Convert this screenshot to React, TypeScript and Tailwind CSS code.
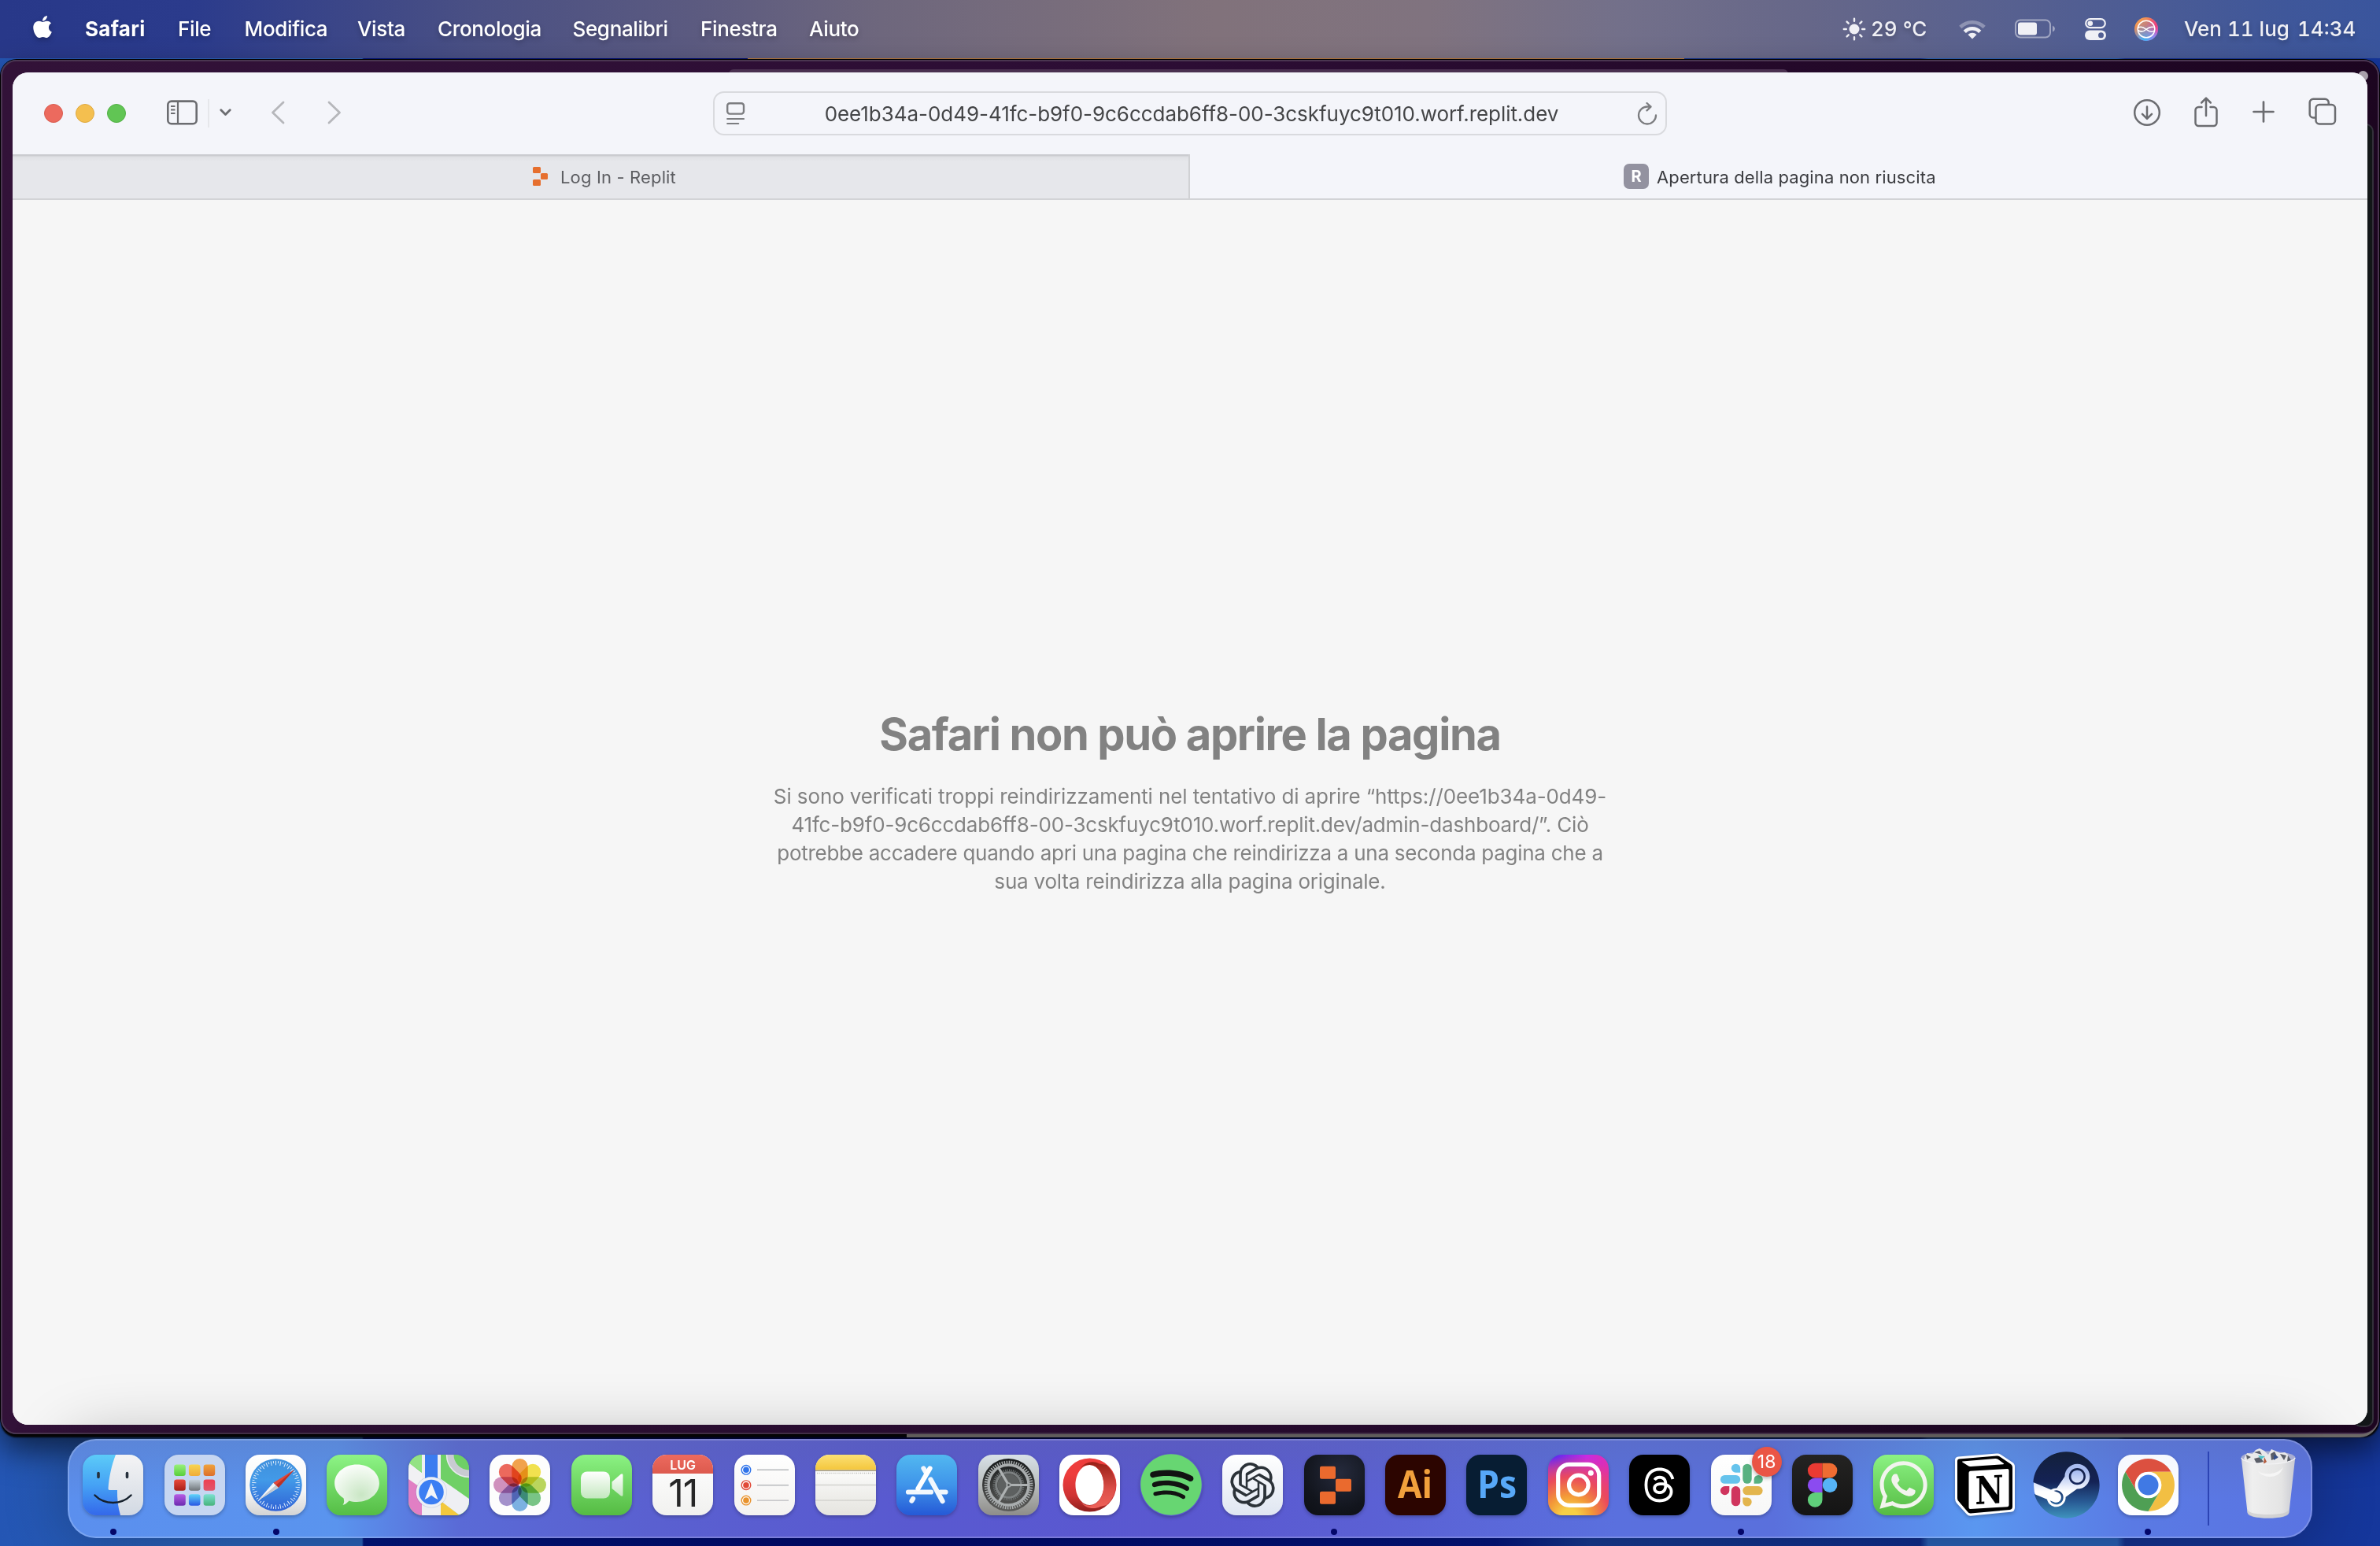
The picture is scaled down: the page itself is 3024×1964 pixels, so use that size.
import React from 'react';
import { FaApple, FaInstagram, FaSpotify, FaSteam, FaThreads, FaWhatsapp } from 'react-icons/fa6';

const menus = [
  { label: 'File', cls: 'w-[84.5px]' },
  { label: 'Modifica', cls: 'w-[143.5px]' },
  { label: 'Vista', cls: 'w-[102px]' },
  { label: 'Cronologia', cls: 'w-[171.5px]' },
  { label: 'Segnalibri', cls: 'w-[162.5px]' },
  { label: 'Finestra', cls: 'w-[138px]' },
  { label: 'Aiuto', cls: 'w-[80px]' },
];

function SiriIcon() {
  return (
    <svg className="block h-[30px] w-[30px]" viewBox="0 0 30 30">
      <defs>
        <linearGradient id="siriA" x1="0" y1="0" x2="1" y2="1">
          <stop offset="0" stopColor="#f3b34c" />
          <stop offset=".4" stopColor="#ee7a5c" />
          <stop offset=".7" stopColor="#c36be0" />
          <stop offset="1" stopColor="#b878f5" />
        </linearGradient>
        <radialGradient id="siriB" cx=".4" cy="1" r=".7">
          <stop offset="0" stopColor="#38b8f4" />
          <stop offset="1" stopColor="#38b8f4" stopOpacity="0" />
        </radialGradient>
        <radialGradient id="siriC" cx="1" cy=".3" r=".5">
          <stop offset="0" stopColor="#f5386c" />
          <stop offset="1" stopColor="#f5386c" stopOpacity="0" />
        </radialGradient>
      </defs>
      <circle cx="15" cy="15" r="15" fill="url(#siriA)" />
      <circle cx="15" cy="15" r="15" fill="url(#siriC)" />
      <circle cx="15" cy="15" r="15" fill="url(#siriB)" />
      <circle cx="15" cy="15" r="10.800" fill="#8a8fae" fillOpacity=".35" />
      <g fill="none" stroke="#fff" strokeWidth="1.500">
        <circle cx="15" cy="15" r="10.800" />
        <path d="M4.400 13.500C8 11 11 12.200 14.500 15s7.500 4.200 10.700 2.200" />
        <path d="M4.600 16.500C8.500 19 12 18 15.500 15s5.500-3.500 9-2.500" />
      </g>
    </svg>
  );
}

function MenuBar() {
  return (
    <header className="relative flex h-[74px] items-center bg-[linear-gradient(90deg,#283889_0%,#2b3b8c_8%,#4a5084_20%,#5b5a80_29%,#6e677d_37%,#81727b_51%,#80737f_60%,#73708a_68%,#666789_76%,#545f91_86%,#3f579a_96%,#3a559d_100%)] text-[26px] leading-[74px] text-white [text-shadow:0_3px_6px_rgba(0,0,0,0.25)]">
      <FaApple className="ml-[39px] mt-[-7px] h-[32px] w-[30px] drop-shadow-[0_3px_3px_rgba(0,0,0,0.25)]" />
      <span className="ml-[39px] w-[118px] whitespace-nowrap font-bold tracking-[0.3px]">Safari</span>
      {menus.map((m) => (
        <span key={m.label} className={m.cls + ' whitespace-nowrap font-medium tracking-[-0.35px]'}>{m.label}</span>
      ))}
      <div className="absolute right-0 top-0 flex h-[74px] items-center font-medium tabular-nums text-[#f0f0f5]">
        <svg className="h-[30px] w-[30px]" viewBox="0 0 30 30">
          <circle cx="15" cy="15" r="6.500" fill="currentColor" />
          <path d="M15 1.800v3M15 25.200v3M1.800 15h3M25.200 15h3M5.600 5.600l2.100 2.100M22.300 22.300l2.100 2.100M5.600 24.400l2.100-2.100M22.300 7.700l2.100-2.100" stroke="currentColor" strokeWidth="2.400" strokeLinecap="round" />
        </svg>
        <span className="ml-[6px] w-[112px] whitespace-nowrap">29 °C</span>
        <svg className="h-[26px] w-[34px]" viewBox="0 0 34 26">
          <path d="M1.800 10.500a21.500 21.500 0 0 1 30.400 0" fill="none" stroke="currentColor" strokeOpacity=".35" strokeWidth="4.600" />
          <path d="M7.300 16.300a13.700 13.700 0 0 1 19.400 0" fill="none" stroke="currentColor" strokeWidth="4.600" />
          <path d="M17 25.500l-5.500-5.500a7.800 7.800 0 0 1 11 0z" fill="currentColor" />
        </svg>
        <svg className="ml-[37px] h-[26px] w-[52px]" viewBox="0 0 52 26">
          <rect x="1" y="1.500" width="44" height="22" rx="6" fill="none" stroke="currentColor" strokeOpacity=".5" strokeWidth="2" />
          <rect x="4" y="4.500" width="24" height="16" rx="3" fill="currentColor" />
          <path d="M48 8.500q3 1.500 3 4t-3 4z" fill="currentColor" fillOpacity=".5" />
        </svg>
        <svg className="ml-[37px] h-[28px] w-[27px]" viewBox="0 0 27 28">
          <rect x="1.200" y="1.200" width="24.600" height="11" rx="5.500" fill="none" stroke="currentColor" strokeWidth="2.200" />
          <circle cx="6.800" cy="6.700" r="3.300" fill="currentColor" />
          <rect x="0" y="15.500" width="27" height="12.500" rx="6.200" fill="currentColor" />
          <circle cx="20.500" cy="21.700" r="3.500" fill="#525f93" />
        </svg>
        <div className="ml-[36px]"><SiriIcon /></div>
        <span className="ml-[33px] w-[144px] whitespace-nowrap">Ven 11 lug</span>
        <span className="w-[105px] whitespace-nowrap">14:34</span>
      </div>
    </header>
  );
}

function Toolbar() {
  return (
    <div className="relative flex h-[104px] w-full items-center bg-[#f4f5fa] text-[#6b6c70]">
      <div className="ml-[40px] flex gap-[16px]">
        <i className="h-[24px] w-[24px] rounded-full border border-[#d95c50] bg-[#ec6a5e]" />
        <i className="h-[24px] w-[24px] rounded-full border border-[#dfa940] bg-[#f4bf4f]" />
        <i className="h-[24px] w-[24px] rounded-full border border-[#52b045] bg-[#61c554]" />
      </div>
      <svg className="ml-[52px] mt-[-3px] h-[32px] w-[39px]" viewBox="0 0 39 32" fill="none" stroke="currentColor">
        <rect x="1.300" y="1.600" width="36.400" height="28.600" rx="4.500" strokeWidth="2.600" />
        <path d="M14 2v28" strokeWidth="2.200" />
        <path d="M5 8h5.500M5 12.500h5.500M5 17h5.500" strokeWidth="2" />
      </svg>
      <i className="ml-[13px] h-[36px] w-[2px] bg-[#e6e7eb]" />
      <svg className="ml-[13px] mt-[-2px] h-[10px] w-[15px]" viewBox="0 0 15 10" fill="none" stroke="currentColor" strokeWidth="2.800" strokeLinecap="round" strokeLinejoin="round">
        <path d="M1.800 1.800l5.700 5.700 5.700-5.700" />
      </svg>
      <svg className="ml-[50px] mt-[-3px] h-[30px] w-[18px] text-[#b6b7bb]" viewBox="0 0 18 30" fill="none" stroke="currentColor" strokeWidth="2.800" strokeLinecap="round" strokeLinejoin="round">
        <path d="M16 2L2.500 15 16 28" />
      </svg>
      <svg className="ml-[54px] mt-[-3px] h-[30px] w-[18px] text-[#b6b7bb]" viewBox="0 0 18 30" fill="none" stroke="currentColor" strokeWidth="2.800" strokeLinecap="round" strokeLinejoin="round">
        <path d="M2 2l13.500 13L2 28" />
      </svg>
      <div className="ml-[472px] flex h-[56px] w-[1212px] items-center rounded-[14px] border-[2px] border-[#d9dade]">
        <svg className="ml-[14px] h-[30px] w-[26px]" viewBox="0 0 26 30" fill="none" stroke="#7c7d80" strokeLinecap="round">
          <rect x="2.200" y="2.200" width="20.800" height="13.400" rx="3" strokeWidth="2.400" />
          <path d="M2.200 22h20.800M2.200 28h14" strokeWidth="2.200" />
        </svg>
        <div className="flex-1 whitespace-nowrap pt-[2px] text-center text-[26px] leading-[52px] tracking-[-0.05px] text-[#444547]">0ee1b34a-0d49-41fc-b9f0-9c6ccdab6ff8-00-3cskfuyc9t010.worf.replit.dev</div>
        <svg className="mr-[10px] h-[29px] w-[26px]" viewBox="0 0 26 29" fill="none" stroke="#7c7d80" strokeWidth="2.300" strokeLinecap="round" strokeLinejoin="round">
          <path d="M24 16.500a11 11 0 1 1-11-11h4.500M12.500 1l5 4.600-5 4.800" />
        </svg>
      </div>
      <div className="ml-auto mr-[39px] mt-[-2px] flex items-center">
        <svg className="h-[36px] w-[36px]" viewBox="0 0 36 36" fill="none" stroke="currentColor" strokeWidth="2.500" strokeLinecap="round" strokeLinejoin="round">
          <circle cx="18" cy="18" r="15.800" />
          <path d="M18 10.500v15M12 19.800l6 6 6-6" />
        </svg>
        <svg className="ml-[41px] mt-[-2px] h-[40px] w-[32px]" viewBox="0 0 32 40" fill="none" stroke="currentColor" strokeWidth="2.500" strokeLinecap="round" strokeLinejoin="round">
          <path d="M10.500 14H6.500a4 4 0 0 0-4 4v16a4 4 0 0 0 4 4h19a4 4 0 0 0 4-4V18a4 4 0 0 0-4-4h-4" />
          <path d="M16 25V3M10.200 8.500L16 2.700l5.800 5.800" />
        </svg>
        <svg className="ml-[43px] mt-[-2px] h-[28px] w-[28px]" viewBox="0 0 28 28" fill="none" stroke="currentColor" strokeWidth="2.700" strokeLinecap="round">
          <path d="M14 1.500v25M1.500 14h25" />
        </svg>
        <svg className="ml-[43px] mt-[-2px] h-[36px] w-[36px]" viewBox="0 0 36 36" fill="none" stroke="currentColor" strokeWidth="2.500" strokeLinejoin="round">
          <rect x="9.500" y="9" width="24.500" height="24.500" rx="4.500" />
          <path d="M9.500 25.500H6.200a4.500 4.500 0 0 1-4.500-4.500V6.200a4.500 4.500 0 0 1 4.500-4.500H21.200a4.500 4.500 0 0 1 4.500 4.500V9" />
        </svg>
      </div>
    </div>
  );
}

function TabBar() {
  return (
    <div className="flex h-[58px] w-full border-b-[2px] border-[#d2d3d6] text-[22px] leading-[54px]">
      <div className="flex w-[1496px] items-center border-r-[2px] border-[#d0d1d4] bg-[linear-gradient(180deg,#cbccd0_0,#cbccd0_2px,#dfe0e4_3px,#e6e7eb_9px)] text-[#5d5e62]">
        <svg className="ml-[660px] h-[24px] w-[22px]" viewBox="0 0 22 24" fill="#e66f2e">
          <rect x="1" y="0" width="10" height="8" rx="1.500" />
          <rect x="11" y="8" width="9" height="8" rx="1.500" />
          <rect x="1" y="16" width="10" height="8" rx="1.500" />
        </svg>
        <span className="ml-[14px] whitespace-nowrap pt-[1px] tracking-[0.15px]">Log In - Replit</span>
      </div>
      <div className="flex flex-1 items-center bg-[#f4f5fa] text-[#3b3c40]">
        <div className="ml-[551px] flex h-[32px] w-[32px] items-center justify-center rounded-[7px] bg-[#9392a0] text-[20px] font-bold text-white">R</div>
        <span className="ml-[10px] whitespace-nowrap pt-[1px] tracking-[0.12px]">Apertura della pagina non riuscita</span>
      </div>
    </div>
  );
}

const errorLines = [
  { text: 'Si sono verificati troppi reindirizzamenti nel tentativo di aprire “https://0ee1b34a-0d49-', cls: 'tracking-[-0.11px]' },
  { text: '41fc-b9f0-9c6ccdab6ff8-00-3cskfuyc9t010.worf.replit.dev/admin-dashboard/”. Ciò', cls: 'tracking-[-0.18px]' },
  { text: 'potrebbe accadere quando apri una pagina che reindirizza a una seconda pagina che a', cls: 'tracking-[-0.26px]' },
  { text: 'sua volta reindirizza alla pagina originale.', cls: 'tracking-[-0.2px]' },
];

function ErrorPage() {
  return (
    <main className="flex flex-1 flex-col items-center bg-[#f6f6f6] pt-[644px] text-center text-[#828282]">
      <h1 className="whitespace-nowrap text-[56px] font-bold leading-[70px] tracking-[-1.35px]">Safari non può aprire la pagina</h1>
      <p className="mt-[26px] text-[26px] leading-[36px]">
        {errorLines.map((l) => (
          <span key={l.text} className={'block whitespace-nowrap ' + l.cls}>{l.text}</span>
        ))}
      </p>
    </main>
  );
}

function Tile({ cls = '', children }: { cls?: string; children?: React.ReactNode }) {
  return (
    <div className={'relative flex h-[77px] w-[77px] items-center justify-center overflow-hidden rounded-[18px] shadow-[0_2px_4px_rgba(0,0,0,0.25)] ' + cls}>{children}</div>
  );
}

const full = 'block h-[77px] w-[77px]';

function Finder() {
  return (
    <Tile>
      <svg className={full} viewBox="0 0 77 77">
        <defs>
          <linearGradient id="fiB" x1="0" y1="0" x2="0" y2="1"><stop offset="0" stopColor="#5ccbf8" /><stop offset=".5" stopColor="#45a2f5" /><stop offset="1" stopColor="#3468ea" /></linearGradient>
          <linearGradient id="fiW" x1="0" y1="0" x2="0" y2="1"><stop offset="0" stopColor="#f4f4f5" /><stop offset="1" stopColor="#d2d9e3" /></linearGradient>
        </defs>
        <rect width="77" height="77" fill="url(#fiB)" />
        <path d="M42 0C37 13 33.500 28 32.500 43q-.2 2 1.800 2H44q-.5 17 4 32h29V0z" fill="url(#fiW)" />
        <path d="M20 23.500v5M56.500 23.500v5" stroke="#26303c" strokeWidth="3.600" strokeLinecap="round" />
        <path d="M15.500 51.500c12 12.500 34 12.500 46 0" fill="none" stroke="#15202c" strokeWidth="2.500" strokeLinecap="round" />
      </svg>
    </Tile>
  );
}

const padColors = [
  ['#98f07a', '#58cf3c'], ['#f8d552', '#f0ac38'], ['#f0a33c', '#dc6f2c'],
  ['#e94a3c', '#a81f18'], ['#c9d4dc', '#6e7478'], ['#ee4052', '#e0566c'],
  ['#b65ce4', '#6c2bb0'], ['#5cd4fa', '#2a58e4'], ['#7be0d0', '#48b47c'],
];

function Launchpad() {
  return (
    <Tile cls="bg-[#c6d6f1]">
      <svg className={full} viewBox="0 0 77 77">
        {padColors.map(([a, b], i) => (
          <g key={i}>
            <linearGradient id={'lp' + i} x1="0" y1="0" x2="0" y2="1"><stop offset="0" stopColor={a} /><stop offset="1" stopColor={b} /></linearGradient>
            <rect x={12.2 + (i % 3) * 18.7} y={12.5 + Math.floor(i / 3) * 18.9} width="14.600" height="14.400" rx="3.200" fill={`url(#lp${i})`} />
          </g>
        ))}
      </svg>
    </Tile>
  );
}

function Safari() {
  return (
    <Tile cls="bg-[linear-gradient(180deg,#fff,#f6f6f6_60%,#d4d4d4)]">
      <svg className={full} viewBox="0 0 77 77">
        <linearGradient id="saB" x1="0" y1="0" x2="0" y2="1"><stop offset="0" stopColor="#3f8fdc" /><stop offset=".4" stopColor="#429ae8" /><stop offset="1" stopColor="#2f62d6" /></linearGradient>
        <circle cx="38.500" cy="38.500" r="33.200" fill="url(#saB)" />
        {Array.from({ length: 60 }, (_, i) => (
          <path key={i} d={i % 2 ? 'M38.500 7.800v3' : 'M38.500 7.800v5.500'} stroke="#dcebfa" strokeWidth="1" transform={`rotate(${i * 6} 38.500 38.500)`} />
        ))}
        <path d="M62 19L35.300 35.700l6.400 6.200z" fill="#e2483a" />
        <path d="M62 19L38.500 38.800l3.200 3.100z" fill="#b93228" />
        <path d="M15.500 58.500l19.800-22.800 6.400 6.200z" fill="#f4f6f8" />
        <path d="M15.500 58.500l23-19.700 3.200 3.100z" fill="#c3cad2" />
      </svg>
    </Tile>
  );
}

function Messages() {
  return (
    <Tile cls="bg-[linear-gradient(180deg,#8df486,#55bd45)]">
      <svg className={full} viewBox="0 0 77 77">
        <radialGradient id="meG" cx=".6" cy=".75" r=".8"><stop offset="0" stopColor="#c9e6c4" /><stop offset="1" stopColor="#fdfffd" /></radialGradient>
        <path d="M38.500 12.500c15.800 0 28.400 10.500 28.400 23.800S54.300 60 38.500 60c-3.500 0-7-.5-10-1.500-2.500 2.500-4 4.700-8 5.300 2-2.500 2-5.300 1-8.600C14.500 51 10.100 44 10.100 36.300c0-13.300 12.600-23.800 28.400-23.800z" fill="url(#meG)" />
      </svg>
    </Tile>
  );
}

function Maps() {
  return (
    <Tile cls="bg-[#72d26a]">
      <svg className={full} viewBox="0 0 77 77">
        <rect width="77" height="77" fill="#6fd066" />
        <path d="M0 0h17v22L0 10z" fill="#93e284" />
        <path d="M0 30l18 14v33H0z" fill="#e17fc4" />
        <path d="M41 58l24 19H41z" fill="#f3c83d" />
        <path d="M0 10l17 13v20L0 31z" fill="#f1f1f4" />
        <path d="M40 30l37 26v10l-6 11h-6L40 58z" fill="#eeeff3" />
        <rect x="17" width="24" height="77" fill="#eeeff2" />
        <rect x="21" width="16" height="40" fill="#3b7cf0" />
        <circle cx="77" cy="0" r="24" fill="none" stroke="#c9cbd2" strokeWidth="9" />
        <circle cx="77" cy="0" r="28.500" fill="none" stroke="#e9eaee" strokeWidth="1.500" />
        <circle cx="29" cy="47.500" r="20" fill="#1b4fae" fillOpacity=".15" />
        <circle cx="29" cy="47.500" r="17.500" fill="#3b7ef3" stroke="#edf0f6" strokeWidth="3.500" />
        <path d="M29 35.500l8.500 21.500q-4.500-2-8.500-5.500-4 3.500-8.500 5.500z" fill="#f3f5f8" />
      </svg>
    </Tile>
  );
}

const petals = ['#f2993a', '#f2e03c', '#b4d34c', '#6cc07a', '#6fabe0', '#9a86c8', '#cd86b8', '#ec5a4c'];

function Photos() {
  return (
    <Tile cls="bg-[#fdfdfd]">
      <svg className={full} viewBox="0 0 77 77">
        {petals.map((c, i) => (
          <rect key={c} x="28.300" y="5" width="20.400" height="32.500" rx="10.200" fill={c} fillOpacity=".9" className="mix-blend-multiply" transform={`rotate(${i * 45} 38.500 38.500)`} />
        ))}
      </svg>
    </Tile>
  );
}

function FaceTime() {
  return (
    <Tile cls="bg-[linear-gradient(180deg,#8bf283,#55bb43)]">
      <svg className={full} viewBox="0 0 77 77">
        <linearGradient id="ftG" x1="0" y1="0" x2="0" y2="1"><stop offset="0" stopColor="#fff" /><stop offset="1" stopColor="#c4e8bf" /></linearGradient>
        <rect x="12" y="21.500" width="37" height="34" rx="8" fill="url(#ftG)" />
        <path d="M51.500 34.500L62.500 25q3-2 3 1.500v24q0 3.500-3 1.500l-11-9z" fill="url(#ftG)" />
      </svg>
    </Tile>
  );
}

function Calendar() {
  return (
    <Tile cls="bg-[linear-gradient(180deg,#fff,#f1f1ef)]">
      <div className="flex h-full w-full flex-col items-center">
        <div className="h-[24px] w-full bg-[linear-gradient(180deg,#ec6a5e,#dd5a4e)] text-center text-[16px] font-semibold leading-[26px] text-white">LUG</div>
        <div className="text-[48px] leading-[50px] tracking-[-1px] text-[#262626]">11</div>
      </div>
    </Tile>
  );
}

function Reminders() {
  return (
    <Tile cls="bg-[linear-gradient(180deg,#fff,#f3f2f0)]">
      <svg className={full} viewBox="0 0 77 77">
        {['#2f73ea', '#e14a38', '#e8932e'].map((c, i) => (
          <g key={c} transform={`translate(0 ${i * 19.4})`}>
            <circle cx="15" cy="19.300" r="5.800" fill="#fff" stroke={c} strokeWidth="1.400" />
            <circle cx="15" cy="19.300" r="3.800" fill={c} />
            <path d="M29 19.300h40" stroke="#b8babd" strokeWidth="1.400" />
          </g>
        ))}
      </svg>
    </Tile>
  );
}

function Notes() {
  return (
    <Tile cls="bg-[linear-gradient(180deg,#fbfbfa_20px,#e5e4df)]">
      <svg className={full} viewBox="0 0 77 77">
        <linearGradient id="noG" x1="0" y1="0" x2="0" y2="1"><stop offset="0" stopColor="#fbe074" /><stop offset="1" stopColor="#f4c63c" /></linearGradient>
        <rect width="77" height="19.500" fill="url(#noG)" />
        <path d="M0 20.300h77" stroke="#a09a8a" strokeWidth="1.400" />
        <path d="M2 23.500h74" stroke="#bdbdba" strokeWidth="1.600" strokeDasharray="1.100 1.400" />
        <path d="M0 38.500h77M0 58h77" stroke="#d3d3d0" strokeWidth="1.400" />
      </svg>
    </Tile>
  );
}

function AppStore() {
  return (
    <Tile cls="bg-[linear-gradient(180deg,#52b8f0,#3f94ea_50%,#2559d6)]">
      <svg className={full} viewBox="0 0 77 77">
        <g stroke="#f1f7fd" strokeWidth="6.200" strokeLinecap="round" fill="none">
          <path d="M15 47.500h29M56 47.500h6.500" />
          <path d="M34.500 17.500l3 5M43.500 31.500l15 27.500" />
          <path d="M21 56l-1.500 2.500" />
          <path d="M42.500 17.500L27.500 43" stroke="#fff" />
        </g>
      </svg>
    </Tile>
  );
}

function Settings() {
  return (
    <Tile cls="bg-[linear-gradient(180deg,#d8e1e7,#b9bdbd_50%,#8e8d89)]">
      <svg className={full} viewBox="0 0 77 77">
        <linearGradient id="seG" x1="0" y1="0" x2="0" y2="1"><stop offset="0" stopColor="#16191a" /><stop offset="1" stopColor="#5c5c5a" /></linearGradient>
        <circle cx="38.500" cy="38.500" r="33.500" fill="url(#seG)" />
        <g fill="none" stroke="#a9adae">
          <circle cx="38.500" cy="38.500" r="28.800" strokeWidth="4.200" strokeDasharray="1.500 1.515" />
          <circle cx="38.500" cy="38.500" r="25.500" strokeWidth="3.400" />
          <circle cx="38.500" cy="38.500" r="18.500" strokeWidth="3" strokeDasharray="1.200 1.220" stroke="#6e7273" />
          <circle cx="38.500" cy="38.500" r="15.800" strokeWidth="3" stroke="#7c8081" />
        </g>
        <circle cx="38.500" cy="38.500" r="14" fill="#5d6060" />
        <path d="M38.500 38.500h25M38.500 38.500L26 17M38.500 38.500L26 60" stroke="#adb1b2" strokeWidth="3.200" />
        <circle cx="38.500" cy="38.500" r="3.200" fill="#a3a7a8" />
        <circle cx="38.500" cy="38.500" r="1.200" fill="#3a3c3c" />
      </svg>
    </Tile>
  );
}

function Opera() {
  return (
    <Tile cls="bg-white">
      <svg className={full} viewBox="0 0 77 77">
        <defs>
          <linearGradient id="opA" x1="0" y1="0" x2="0" y2="1"><stop offset=".3" stopColor="#ee3d3c" /><stop offset=".7" stopColor="#cf3333" /><stop offset="1" stopColor="#8e1f1d" /></linearGradient>
          <linearGradient id="opB" x1="0" y1="0" x2="0" y2="1"><stop offset="0" stopColor="#981f16" /><stop offset=".6" stopColor="#dd5049" /><stop offset="1" stopColor="#ef625a" /></linearGradient>
        </defs>
        <path fillRule="evenodd" d="M38.500 4.500a34 34 0 1 0 0 68 34 34 0 0 0 0-68zM38.500 13c10 0 18 11.500 18 25.500S48.500 64 38.500 64s-18-11.500-18-25.500S28.500 13 38.500 13z" fill="url(#opA)" />
        <path d="M27 17c5-7 15-10 24-5.500l9 1.500a34 34 0 0 1 0 51l-8 2c-9 4.500-19.500 1.500-25-6 3 3 7 4.500 11.500 4.500 10 0 18-11.500 18-25.500S48.500 13 38.500 13C34 13 30 14.500 27 17z" fill="url(#opB)" />
      </svg>
    </Tile>
  );
}

function Spotify() {
  return (
    <div className="flex h-[80px] w-[80px] items-center justify-center rounded-full bg-[radial-gradient(circle,#121212_60%,transparent_61%)] shadow-[0_2px_4px_rgba(0,0,0,0.25)]">
      <FaSpotify className="h-[80px] w-[80px] text-[#67d672]" />
    </div>
  );
}

function ChatGPT() {
  return (
    <Tile cls="bg-[linear-gradient(180deg,#fff,#dfe6f1)]">
      <svg className="h-[57px] w-[57px]" viewBox="0 0 24 24" fill="#2b3238">
        <path d="M22.2819 9.8211a5.9847 5.9847 0 0 0-.5157-4.9108 6.0462 6.0462 0 0 0-6.5098-2.9A6.0651 6.0651 0 0 0 4.9807 4.1818a5.9847 5.9847 0 0 0-3.9977 2.9 6.0462 6.0462 0 0 0 .7427 7.0966 5.98 5.98 0 0 0 .511 4.9107 6.051 6.051 0 0 0 6.5146 2.9001A5.9847 5.9847 0 0 0 13.2599 24a6.0557 6.0557 0 0 0 5.7718-4.2058 5.9894 5.9894 0 0 0 3.9977-2.9001 6.0557 6.0557 0 0 0-.7475-7.0729zm-9.022 12.6081a4.4755 4.4755 0 0 1-2.8764-1.0408l.1419-.0804 4.7783-2.7582a.7948.7948 0 0 0 .3927-.6813v-6.7369l2.02 1.1686a.071.071 0 0 1 .038.052v5.5826a4.504 4.504 0 0 1-4.4945 4.4944zm-9.6607-4.1254a4.4708 4.4708 0 0 1-.5346-3.0137l.142.0852 4.783 2.7582a.7712.7712 0 0 0 .7806 0l5.8428-3.3685v2.3324a.0804.0804 0 0 1-.0332.0615L9.74 19.9502a4.4992 4.4992 0 0 1-6.1408-1.6464zM2.3408 7.8956a4.485 4.485 0 0 1 2.3655-1.9728V11.6a.7664.7664 0 0 0 .3879.6765l5.8144 3.3543-2.0201 1.1685a.0757.0757 0 0 1-.071 0l-4.8303-2.7865A4.504 4.504 0 0 1 2.3408 7.872zm16.5963 3.8558L13.1038 8.364 15.1192 7.2a.0757.0757 0 0 1 .071 0l4.8303 2.7913a4.4944 4.4944 0 0 1-.6765 8.1042v-5.6772a.79.79 0 0 0-.407-.667zm2.0107-3.0231l-.142-.0852-4.7735-2.7818a.7759.7759 0 0 0-.7854 0L9.409 9.2297V6.8974a.0662.0662 0 0 1 .0284-.0615l4.8303-2.7866a4.4992 4.4992 0 0 1 6.6802 4.66zM8.3065 12.863l-2.02-1.1638a.0804.0804 0 0 1-.038-.0567V6.0742a4.4992 4.4992 0 0 1 7.3757-3.4537l-.142.0805L8.704 5.459a.7948.7948 0 0 0-.3927.6813zm1.0976-2.3654l2.602-1.4998 2.6069 1.4998v2.9994l-2.5974 1.4997-2.6067-1.4997Z" />
      </svg>
    </Tile>
  );
}

function Replit() {
  return (
    <Tile cls="bg-[radial-gradient(circle_at_60%_30%,#252a3c,#12151d_65%,#0d0f14)]">
      <svg className={full} viewBox="0 0 77 77" fill="#ea6a2e">
        <rect x="20" y="14.700" width="20" height="16" rx="2" />
        <rect x="40" y="30.700" width="20" height="16" rx="2" />
        <rect x="20" y="46.700" width="20" height="16" rx="2" />
      </svg>
    </Tile>
  );
}

function Adobe({ text, cls, fill, x, w }: { text: string; cls: string; fill: string; x: number; w: number }) {
  return (
    <Tile cls={cls}>
      <svg className={full} viewBox="0 0 77 77">
        <text x={x} y="54.500" fontFamily="Open Sans" fontSize="48" fontWeight="700" fill={fill} textLength={w} lengthAdjust="spacingAndGlyphs">{text}</text>
      </svg>
    </Tile>
  );
}

function Instagram() {
  return (
    <Tile cls="bg-[radial-gradient(circle_at_35%_105%,#f7cf45_12%,#f39a38_30%,#ea4a5c_55%,rgba(230,60,160,0)_85%),radial-gradient(circle_at_10%_0%,#5a28f6,#c92be0_40%,#e8309a_80%)]">
      <svg className={full} viewBox="0 0 77 77" fill="none" stroke="#fff" strokeWidth="5.200">
        <rect x="12.700" y="12.300" width="52" height="52" rx="14" />
        <circle cx="38.800" cy="38.500" r="12.300" />
        <circle cx="54.300" cy="23.300" r="3.500" fill="#fff" stroke="none" />
      </svg>
    </Tile>
  );
}

function Slack() {
  return (
    <div className="relative">
      <Tile cls="bg-[linear-gradient(180deg,#fff,#f7f7f7)]">
        <svg className={full} viewBox="0 0 77 77">
          <g fill="#66c3ec"><path d="M37.200 22.700h-5.700a5.700 5.500 0 1 1 5.700-5.500z" /><rect x="11.900" y="26" width="25.300" height="10.800" rx="5.400" /></g>
          <g fill="#58b181"><rect x="40.300" y="11.700" width="11.400" height="25.100" rx="5.700" /><path d="M54.600 36.800v-5.400a5.600 5.400 0 1 1 5.600 5.400z" /></g>
          <g fill="#d0355e"><path d="M23.300 40v5.700a5.700 5.600 0 1 1-5.700-5.700z" /><rect x="25.800" y="40" width="11.400" height="25.300" rx="5.700" /></g>
          <g fill="#e3b54d"><rect x="40.300" y="40" width="25.300" height="11.300" rx="5.600" /><path d="M40.300 54.500H46a5.700 5.500 0 1 1-5.700 5.500z" /></g>
        </svg>
      </Tile>
      <div className="absolute left-[52px] top-[-10px] h-[38px] w-[38px] rounded-full bg-[#ea5545] text-center text-[23px] leading-[38px] text-white shadow-[0_2px_5px_rgba(0,0,0,0.3)]">18</div>
    </div>
  );
}

function Figma() {
  return (
    <Tile cls="bg-[linear-gradient(180deg,#242322,#141414)]">
      <svg className={full} viewBox="0 0 77 77">
        <path d="M38.500 10.700h-9.300a9.300 9.300 0 0 0 0 18.700h9.300z" fill="#ea3a33" />
        <path d="M38.500 10.700h9.500a9.300 9.300 0 0 1 0 18.700h-9.500z" fill="#ef6c32" />
        <path d="M38.500 29.400h-9.300a9.300 9.300 0 0 0 0 18.700h9.300z" fill="#8b4bf0" />
        <circle cx="48" cy="38.700" r="9.300" fill="#56b4f7" />
        <path d="M38.500 48.100h-9.300a9.300 9.300 0 1 0 9.300 9.300z" fill="#5fcf7a" />
      </svg>
    </Tile>
  );
}

function Notion() {
  return (
    <svg className="h-[80px] w-[76px] drop-shadow-[0_2px_2px_rgba(0,0,0,0.25)]" viewBox="0 0 76 80">
      <path d="M4 4.500L53 .5q3-.2 5 1.200l15 10q3 2 3 5.500v52q0 5-5 5.500l-51 5q-3 .3-5-2L2 63.500q-2-2.500-2-6V9q0-4 4-4.500z" fill="#fff" />
      <path d="M5 7.500L53 3.500q2-.2 3.500.8L71 14q2 1.500 2 4v50q0 3.500-3.500 4L20 76.500q-2.500.2-4-2L4 60.500Q3 59 3 57V10q0-2.300 2-2.500z" fill="#000" />
      <path d="M9.500 10.500L51 7q2-.2 3.500.8l7.500 5.400q.5.800-.7 1L20 17q-2 .2-3.500-1L9.300 11.500q-.5-.9.200-1z" fill="#fff" />
      <path d="M19.500 22.800l47-2.800q2-.1 2 2v44q0 2-2 2.200l-47 2.800q-2 .1-2-2v-44q0-2 2-2.200z" fill="#fff" />
      <text x="0" y="0" transform="translate(25.500 65) skewY(-3)" fontFamily="DejaVu Serif" fontWeight="700" fontSize="49" textLength="36" lengthAdjust="spacingAndGlyphs">N</text>
    </svg>
  );
}

function Steam() {
  return (
    <div className="relative h-[87px] w-[87px]">
      <div className="absolute left-[2px] top-[2px] h-[83px] w-[83px] rounded-full bg-[linear-gradient(180deg,#a9bdf0_30%,#fff_60%)]" />
      <svg className="absolute h-0 w-0">
        <linearGradient id="stG" x1="0" y1="0" x2="0" y2="1"><stop offset="0" stopColor="#13203a" /><stop offset=".45" stopColor="#142255" /><stop offset=".75" stopColor="#285a94" /><stop offset="1" stopColor="#3f93bd" /></linearGradient>
      </svg>
      <FaSteam className="relative h-[87px] w-[87px]" fill="url(#stG)" />
    </div>
  );
}

function Chrome() {
  return (
    <Tile cls="bg-[linear-gradient(180deg,#f5f8fe,#fff)]">
      <svg className={full} viewBox="-38.500 -38.500 77 77">
        <path d="M-29 -16.700A33.500 33.500 0 0 1 29 -16.700H0A16.700 16.700 0 0 0 -14.500 8.400z" fill="#dc5040" />
        <path d="M29 -16.700A33.500 33.500 0 0 1 0 33.500L14.500 8.400A16.700 16.700 0 0 0 0 -16.700z" fill="#f2bf43" />
        <path d="M0 33.500A33.500 33.500 0 0 1 -29 -16.700L-14.500 8.400A16.700 16.700 0 0 0 14.500 8.400z" fill="#4f9f54" />
        <circle r="16.300" fill="#fff" />
        <circle r="13" fill="#4079e4" />
      </svg>
    </Tile>
  );
}

function Trash() {
  return (
    <svg className="h-[90px] w-[70px]" viewBox="0 0 70 90">
      <defs>
        <linearGradient id="trG" x1="0" y1="0" x2="1" y2="0"><stop offset="0" stopColor="#d9dade" /><stop offset=".2" stopColor="#efefef" /><stop offset=".75" stopColor="#e4e4e4" /><stop offset="1" stopColor="#c9cad2" /></linearGradient>
      </defs>
      <ellipse cx="35" cy="13" rx="34.500" ry="8.500" fill="#a9aed2" />
      <path d="M4 14l4-7 7 1 4-5 5-2 6 3 5 5 4-7 7 3 4 2 6-1 4 3 3 9-10 8H12z" fill="#e9e9ea" />
      <path d="M7 9l6 3-5 3zM17 6l7-2 3 5zM38 8l5-3 4 8-8 3zM50 8l8 2-3 6zM17 14l8-2 4 6-9 2zM60 10l4 6-5 2z" fill="#5a5e68" />
      <path d="M22 10l9 1-5 4z" fill="#4fc4c8" />
      <path d="M42 9l6 3-6 4z" fill="#35508c" />
      <path d="M30 12l3 6-4 3z" fill="#b45a3c" />
      <path d="M.8 13c1.500 4 16 8 34.200 8s32.700-4 34.200-8L61.500 82c-.6 5-12 7.500-26.500 7.500S9.100 87 8.500 82z" fill="url(#trG)" />
      <path d="M8 78c2 5 12 7 27 7s25-2 27-7l-.5 5c-1 5-12 6.500-26.500 6.500S9.500 88 8.500 83z" fill="#c4c4c6" fillOpacity=".6" />
      <path d="M22 30c8 5 24 5 32-5-3 9-10 12-17 12s-12-3-15-7z" fill="#f5f5f5" />
      <path d="M.8 13c1.500 4 16 8 34.200 8s32.700-4 34.200-8" fill="none" stroke="#f4f4f6" strokeWidth="1.200" />
    </svg>
  );
}

const apps: { name: string; icon: React.ReactNode; running?: boolean }[] = [
  { name: 'finder', icon: <Finder />, running: true },
  { name: 'launchpad', icon: <Launchpad /> },
  { name: 'safari', icon: <Safari />, running: true },
  { name: 'messages', icon: <Messages /> },
  { name: 'maps', icon: <Maps /> },
  { name: 'photos', icon: <Photos /> },
  { name: 'facetime', icon: <FaceTime /> },
  { name: 'calendar', icon: <Calendar /> },
  { name: 'reminders', icon: <Reminders /> },
  { name: 'notes', icon: <Notes /> },
  { name: 'appstore', icon: <AppStore /> },
  { name: 'settings', icon: <Settings /> },
  { name: 'opera', icon: <Opera /> },
  { name: 'spotify', icon: <Spotify /> },
  { name: 'chatgpt', icon: <ChatGPT /> },
  { name: 'replit', icon: <Replit />, running: true },
  { name: 'illustrator', icon: <Adobe text="Ai" cls="bg-[#2c0500]" fill="#f2a03c" x={16} w={44} /> },
  { name: 'photoshop', icon: <Adobe text="Ps" cls="bg-[#071d33]" fill="#57a8f8" x={14} w={50} /> },
  { name: 'instagram', icon: <Instagram /> },
  { name: 'threads', icon: <Tile cls="bg-black"><FaThreads className="h-[47px] w-[41px] text-white" /></Tile> },
  { name: 'slack', icon: <Slack />, running: true },
  { name: 'figma', icon: <Figma /> },
  { name: 'whatsapp', icon: <Tile cls="bg-[linear-gradient(180deg,#8bf283,#55bb43)]"><FaWhatsapp className="h-[69px] w-[61px] text-[#f2f4ee]" /></Tile> },
  { name: 'notion', icon: <Notion /> },
  { name: 'steam', icon: <Steam /> },
  { name: 'chrome', icon: <Chrome />, running: true },
];

function Dock() {
  return (
    <nav className="absolute left-[86px] top-[1828px] flex h-[126px] w-[2852px] rounded-[36px] border-[2px] border-white/20 bg-[linear-gradient(180deg,rgba(90,100,150,0.25),rgba(90,100,150,0)_60%),linear-gradient(90deg,#5b8fee_0%,#5a94ee_12%,#5a6ad6_17.500%,#5a60d0_26%,#5959d0_38%,#5a58d0_50%,#5b60d4_58%,#5a70de_69%,#5a70dc_76%,#5a8aea_82%,#5a97f0_85%,#5a7ae4_92%,#5a74e2_100%)] bg-origin-border pl-[4px] shadow-[0_0_80px_rgba(0,0,0,0.28)]">
      {apps.map((a) => (
        <div key={a.name} className="relative flex w-[103.430px] shrink-0 justify-center">
          <div className="flex h-[112px] items-center">{a.icon}</div>
          {a.running && <i className="absolute bottom-[2px] left-[47.700px] h-[8px] w-[8px] rounded-full bg-[#04076a]" />}
        </div>
      ))}
      <i className="ml-[24px] mt-[14px] h-[94px] w-[2px] bg-[#2c44b4]" />
      <div className="ml-[40px] mt-[9px]"><Trash /></div>
    </nav>
  );
}

export default function App() {
  return (
    <div className="relative h-[1964px] w-[3024px] overflow-hidden bg-[linear-gradient(90deg,#2456b4_0,#2a62b8_300px,#2a62b8_460px,#03157c_462px,#000a6c_1100px,#04147a_1900px,#17398f_2020px,#0f2c8a_2440px,#2a60b4_2450px,#2a60b4_2690px,#15318e_2700px,#15379c_3024px)] font-['Inter',sans-serif]">
      <MenuBar />
      <div className="absolute left-[950px] top-[74px] h-[2px] w-[1190px] bg-[#b97a3c]" />
      <div className="absolute left-[1px] top-[76px] h-[1746px] w-[3022px] rounded-[20px] border-[2px] border-[#4a3550] bg-[linear-gradient(90deg,#321238,#2c0d34_50%,#1c0520)] shadow-[0_0_0_1px_#000,0_4px_2px_#060606,0_20px_40px_rgba(0,0,0,0.6)]" />
      <div className="absolute left-[1152px] top-[1782px] h-[44px] w-[1870px] rounded-br-[24px] border-b-[4px] border-[#6e6a68]" />
      <div className="absolute left-[926px] top-[88px] h-[8px] w-[1346px] rounded-t-[6px] bg-[#4a3050]" />
      <div className="absolute left-[2996px] top-[90px] h-[13px] w-[13px] rounded-full bg-[#a8a0ab]" />
      <div className="absolute left-[2990px] top-[157px] h-[1656px] w-[26px] rounded-[10px] border-[2px] border-[#33303a] bg-[#121618]" />
      <section className="absolute left-[16px] top-[92px] flex h-[1718px] w-[2992px] flex-col overflow-hidden rounded-[20px] bg-[#f6f6f6]">
        <Toolbar />
        <TabBar />
        <ErrorPage />
      </section>
      <Dock />
    </div>
  );
}
